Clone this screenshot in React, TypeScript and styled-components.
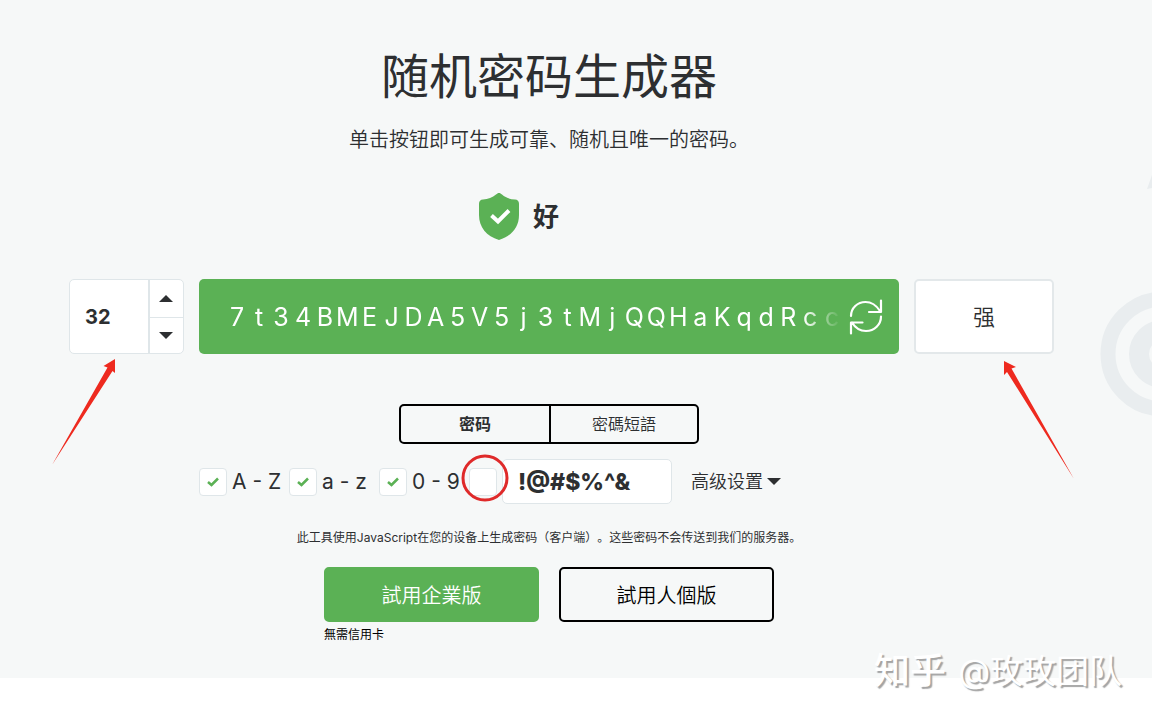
import React, { useState } from "react";
import styled, { createGlobalStyle, css } from "styled-components";

const green = "#5bb155";
const ink = "#2d2f31";
const line = "#dfe6e9";
const red = "#ee2a1f";

const GlobalStyle = createGlobalStyle`
  *, *::before, *::after { box-sizing: border-box; }
  body {
    margin: 0;
    background: #fff;
    color: ${ink};
    font-family: Inter, "Noto Sans CJK SC", sans-serif;
    text-spacing-trim: space-all;
    overflow-x: hidden;
  }
  button, input { font: inherit; color: inherit; margin: 0; }
  button { cursor: pointer; }
`;

const Page = styled.div`
  position: relative;
  min-height: 100vh;
`;

const Hero = styled.main`
  position: relative;
  overflow: hidden;
  background: #f6f8f8;
  padding: 41px 54px 33px 0;
  display: flex;
  flex-direction: column;
  align-items: center;
`;

const Title = styled.h1`
  margin: 0;
  font-size: 48px;
  line-height: 72px;
  font-weight: 400;
`;

const Subtitle = styled.p`
  margin: 12px 0 0;
  font-size: 20px;
  line-height: 30px;
  font-weight: 350;
`;

const Rating = styled.div`
  margin: 38px 60px 0 0;
  display: flex;
  align-items: center;
  gap: 14px;
  font-size: 26px;
  line-height: 47px;
  font-weight: 700;
`;

const Generator = styled.form`
  width: 100%;
  margin-top: 39px;
  display: grid;
  grid-template-columns: 1fr minmax(0, 700px) 1fr;
  gap: 15px;
`;

const Side = styled.div<{ $end?: boolean }>`
  position: relative;
  display: flex;
  height: 75px;
  justify-self: ${(p) => (p.$end ? "end" : "start")};
`;

const Counter = styled.div`
  display: grid;
  grid-template-columns: 80px 1fr;
  border: 1px solid ${line};
  border-radius: 5px;
  background: #fff;
  overflow: hidden;
  width: 115px;
`;

const CountInput = styled.input`
  min-width: 0;
  border: 0;
  border-right: 2px solid ${line};
  background: transparent;
  padding: 0 0 0 15px;
  font-size: 20px;
  font-weight: 700;
  outline: none;
`;

const Steps = styled.div`
  display: grid;
  grid-template-rows: 1fr 1fr;
`;

const Step = styled.button`
  border: 0;
  background: transparent;
  padding: 0 2px 0 0;
  display: flex;
  align-items: center;
  justify-content: center;

  & + & { border-top: 1px solid ${line}; }
`;

const PasswordBar = styled.div`
  display: flex;
  align-items: center;
  justify-content: space-between;
  height: 75px;
  padding: 0 16px 0 27px;
  border-radius: 5px;
  background: ${green};
  color: #fff;
`;

const Password = styled.output`
  display: flex;
  overflow: hidden;
  font-size: 25px;
  line-height: 40px;
  mask-image: linear-gradient(to right, #000 calc(100% - 40px), transparent calc(100% - 2px));
`;

const Char = styled.span`
  flex: 0 0 22px;
  text-align: center;
`;

const Refresh = styled.button`
  border: 0;
  background: transparent;
  padding: 0;
  display: flex;
`;

const Strength = styled.button`
  width: 140px;
  border: 2px solid #e3e8ea;
  border-radius: 5px;
  background: #fff;
  padding: 0 0 4px;
  font-size: 22px;
  font-weight: 350;
`;

const Mark = styled.svg<{ $left: number; $top: number }>`
  position: absolute;
  left: ${(p) => p.$left}px;
  top: ${(p) => p.$top}px;
  pointer-events: none;
  overflow: visible;
`;

const Tabs = styled.div`
  margin-top: 50px;
  display: grid;
  grid-template-columns: 1fr 1fr;
  width: 300px;
  height: 40px;
  border: 2px solid #000;
  border-radius: 5px;
`;

const Tab = styled.button<{ $active?: boolean }>`
  border: 0;
  background: transparent;
  padding: 0 0 3px;
  font-size: 16px;
  font-weight: ${(p) => (p.$active ? 700 : 350)};

  & + & { border-left: 2px solid #000; }
`;

const Options = styled.div`
  width: 100%;
  max-width: 700px;
  margin-top: 15px;
  display: flex;
  align-items: center;
`;

const Option = styled.label<{ $bare?: boolean }>`
  position: relative;
  display: flex;
  align-items: center;
  gap: 5px;
  width: ${(p) => (p.$bare ? 33 : 90)}px;
  font-size: 21px;
  line-height: 28px;
  white-space: nowrap;
`;

const TickBox = styled.span`
  display: grid;
  place-items: center;
  flex: none;

  & > * { grid-area: 1 / 1; }
  svg { pointer-events: none; }
`;

const Tick = styled.input`
  appearance: none;
  width: 28px;
  height: 28px;
  border: 1px solid ${line};
  border-radius: 4px;
  background: #fff;
`;

const Symbols = styled.input`
  width: 170px;
  height: 45px;
  border: 1px solid ${line};
  border-radius: 5px;
  background: #fff;
  padding: 0 15px;
  font-size: 23px;
  font-weight: 800;
  outline: none;
`;

const Advanced = styled.button`
  margin-left: 19px;
  border: 0;
  background: transparent;
  padding: 0;
  display: flex;
  align-items: center;
  gap: 4px;
  font-size: 18px;
  line-height: 28px;
  font-weight: 350;
`;

const Note = styled.p`
  margin: 24px 0 0;
  font-size: 12px;
  line-height: 20px;
`;

const Actions = styled.div`
  margin-top: 19px;
  display: flex;
  gap: 20px;
  color: #000;
`;

const Action = styled.a<{ $solid?: boolean }>`
  width: 215px;
  height: 55px;
  display: flex;
  align-items: center;
  justify-content: center;
  border: 2px solid #000;
  border-radius: 5px;
  color: #000;
  font-size: 20px;
  font-weight: 350;
  text-decoration: none;
  ${(p) =>
    p.$solid &&
    css`
      border-color: ${green};
      background: ${green};
      color: #fff;
    `}
`;

const Small = styled.small`
  display: block;
  margin-top: 3px;
  font-size: 12px;
  line-height: 20px;
`;

const Backdrop = styled.svg`
  position: absolute;
  right: 0;
  top: 170px;
  pointer-events: none;
`;

const Watermark = styled.div`
  position: absolute;
  right: 30px;
  top: 647px;
  display: flex;
  gap: 12px;
  color: #fff;
  font-size: 33px;
  line-height: 48px;
  text-shadow: 2px 2px 1px #a4a4a4;
  pointer-events: none;

  b { font-size: 36px; font-weight: 500; }
`;

const Caret = ({ up = false }: { up?: boolean }) => (
  <svg width="14" height="7" viewBox="0 0 14 7" fill={ink} aria-hidden="true">
    <path d={up ? "M0 7 7 0l7 7z" : "M0 0h14L7 7z"} />
  </svg>
);

const SYMBOLS = "!@#$%^&";

export default function App() {
  const [length, setLength] = useState(32);
  const [mode, setMode] = useState("word");
  const password = "7t34BMEJDA5V5j3tMjQQHaKqdRcc";

  return (
    <Page>
      <GlobalStyle />
      <Hero>
        <Backdrop width="52" height="250" viewBox="0 0 52 250" fill="#e9edef" aria-hidden="true">
          <path d="M52 5 47 19l5-1z" />
          <circle cx="63" cy="184" r="55" fill="none" stroke="#e9edef" strokeWidth="15" />
          <circle cx="63" cy="184" r="24" fill="none" stroke="#e9edef" strokeWidth="20" />
        </Backdrop>

        <Title>随机密码生成器</Title>
        <Subtitle>单击按钮即可生成可靠、随机且唯一的密码。</Subtitle>

        <Rating>
          <svg width="40" height="47" viewBox="0 0 40 47" aria-hidden="true">
            <path
              fill={green}
              d="M20 0c1.200 0 1.900.6 3 1.600C26.500 4.700 31 6.300 36 6.600c2.500.2 4 1.600 4 4.200V22c0 12.500-7.500 21-20 25C7.500 43 0 34.500 0 22V10.800c0-2.600 1.500-4 4-4.200 5-.3 9.500-1.900 13-5C18.100.6 18.800 0 20 0z"
            />
            <path d="m12.500 22.500 6.500 6 11-11" fill="none" stroke="#fff" strokeWidth="4" />
          </svg>
          <span>好</span>
        </Rating>

        <Generator onSubmit={(e) => e.preventDefault()}>
          <Side $end>
            <Counter>
              <CountInput
                aria-label="密码长度"
                value={length}
                onChange={(e) => setLength(Number(e.target.value) || 0)}
              />
              <Steps>
                <Step type="button" aria-label="增加" onClick={() => setLength(length + 1)}>
                  <Caret up />
                </Step>
                <Step type="button" aria-label="减少" onClick={() => setLength(length - 1)}>
                  <Caret />
                </Step>
              </Steps>
            </Counter>
            <Mark $left={-17} $top={80} width="64" height="106" viewBox="0 0 64 106" fill={red}>
              <path d="M63 0 51.500 7l4 1.500L0 106 60.500 12l2.500 2z" />
            </Mark>
          </Side>

          <PasswordBar>
            <Password aria-label="密码">
              {password.split("").map((c, i) => (
                <Char key={i}>{c}</Char>
              ))}
            </Password>
            <Refresh type="submit" aria-label="重新生成">
              <svg
                width="34"
                height="36"
                viewBox="0 0 34 36"
                fill="none"
                stroke="#fff"
                strokeWidth="2.200"
                strokeLinecap="round"
                strokeLinejoin="round"
                aria-hidden="true"
              >
                <path d="M2 17C2 9 8.500 3 16.500 3c6 0 11 3.500 14.500 9M32 1.500v11.500H20M32 17.500c0 8-6.500 14.500-15 14.500-6 0-11-3.500-14-8.500M2 34.500V23.500h11.500" />
              </svg>
            </Refresh>
          </PasswordBar>

          <Side>
            <Strength type="button">强</Strength>
            <Mark $left={90} $top={82} width="70" height="118" viewBox="0 0 70 118" fill={red}>
              <path d="M0 0l12 6-4.500 1.500L70 118 3 11l-3 3z" />
            </Mark>
          </Side>
        </Generator>

        <Tabs role="tablist">
          <Tab role="tab" aria-selected={mode === "word"} $active={mode === "word"} onClick={() => setMode("word")}>
            密码
          </Tab>
          <Tab role="tab" aria-selected={mode === "phrase"} $active={mode === "phrase"} onClick={() => setMode("phrase")}>
            密碼短語
          </Tab>
        </Tabs>

        <Options>
          {["A - Z", "a - z", "0 - 9"].map((text) => (
            <Option key={text}>
              <TickBox>
                <Tick type="checkbox" defaultChecked />
                <svg width="12" height="10" viewBox="0 0 12 10" aria-hidden="true">
                  <path d="m1 5 3.500 3L11 1.500" fill="none" stroke={green} strokeWidth="2.500" />
                </svg>
              </TickBox>
              {text}
            </Option>
          ))}
          <Option $bare>
            <TickBox>
              <Tick type="checkbox" aria-label={SYMBOLS} />
            </TickBox>
            <Mark $left={-8} $top={-13} width="48" height="48" viewBox="0 0 48 48">
              <circle cx="24" cy="23" r="22" fill="none" stroke="#df2a2a" strokeWidth="3" />
            </Mark>
          </Option>
          <Symbols aria-label="特殊字符" defaultValue={SYMBOLS} />
          <Advanced type="button">
            高级设置
            <Caret />
          </Advanced>
        </Options>

        <Note>此工具使用JavaScript在您的设备上生成密码（客户端）。这些密码不会传送到我们的服务器。</Note>

        <Actions>
          <div>
            <Action $solid href="#business">試用企業版</Action>
            <Small>無需信用卡</Small>
          </div>
          <Action href="#personal">試用人個版</Action>
        </Actions>
      </Hero>

      <Watermark>
        <b>知乎</b>
        <span>@玫玫团队</span>
      </Watermark>
    </Page>
  );
}
